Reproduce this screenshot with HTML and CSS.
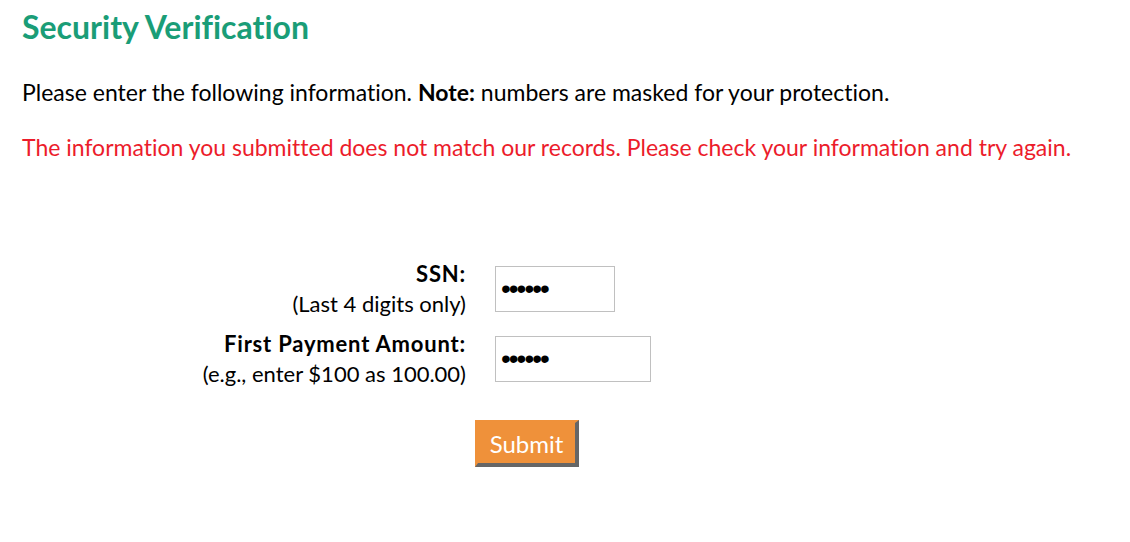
FILE: index.html
```html
<!DOCTYPE html>
<html>
<head>
<meta charset="utf-8">
<link rel="stylesheet" href="styles.css">
</head>
<body>
<main class="page">
  <h1 class="title">Security Verification</h1>
  <p class="intro">Please enter the following information. <strong>Note:</strong> numbers are masked for your protection.</p>
  <p class="error">The information you submitted does not match our records. Please check your information and try again.</p>
  <form class="form">
    <div class="label">
      <div class="label-main">SSN:</div>
      <div class="label-hint">(Last 4 digits only)</div>
    </div>
    <div class="field"><input class="input input-ssn" type="password" value="123456"></div>
    <div class="label">
      <div class="label-main">First Payment Amount:</div>
      <div class="label-hint">(e.g., enter $100 as 100.00)</div>
    </div>
    <div class="field"><input class="input input-amount" type="password" value="123456"></div>
    <div class="actions"><button class="submit" type="button">Submit</button></div>
  </form>
</main>
</body>
</html>
```
FILE: styles.css
```css
html, body {
  margin: 0;
  padding: 0;
  background: #fff;
}
body {
  font-family: Lato, "Open Sans", sans-serif;
  color: #000;
  font-variant-ligatures: none;
}
.page {
  padding: 9px 22px 0 22px;
}
.title {
  margin: 0;
  font-size: 32px;
  line-height: 36px;
  font-weight: 700;
  color: #1a9d77;
}
.intro {
  margin: 32px 0 0 0;
  font-size: 23px;
  line-height: 30px;
}
.intro strong {
  font-weight: 700;
}
.error {
  margin: 25px 0 0 0;
  font-size: 23px;
  line-height: 30px;
  color: #ec1c2b;
}
.form {
  display: grid;
  grid-template-columns: 444px auto;
  column-gap: 29px;
  row-gap: 10px;
  margin-top: 97px;
}
.label {
  text-align: right;
  font-size: 22px;
  line-height: 30px;
}
.label-main {
  font-weight: 700;
  letter-spacing: 0.8px;
}
.field {
  padding-top: 7px;
}
.input {
  display: block;
  box-sizing: border-box;
  height: 46px;
  border: 1px solid #c0c0c0;
  padding: 0 5px;
  font-size: 28px;
  letter-spacing: -2px;
  font-family: "Liberation Sans", Arial, sans-serif;
  background: #fff;
  outline: none;
  margin: 0;
}
.input-ssn { width: 120px; }
.input-amount { width: 156px; }
.actions {
  grid-column: 1 / 3;
  padding-left: 453px;
  padding-top: 21px;
}
.submit {
  box-sizing: border-box;
  width: 104px;
  height: 47px;
  border-style: solid;
  border-width: 3px 4px 4px 3px;
  border-color: #ef913a #666 #666 #ef913a;
  background: #ef913a;
  color: #fff;
  font-family: Lato, "Open Sans", sans-serif;
  font-size: 24px;
  padding: 0;
  margin: 0;
  cursor: pointer;
}
```
